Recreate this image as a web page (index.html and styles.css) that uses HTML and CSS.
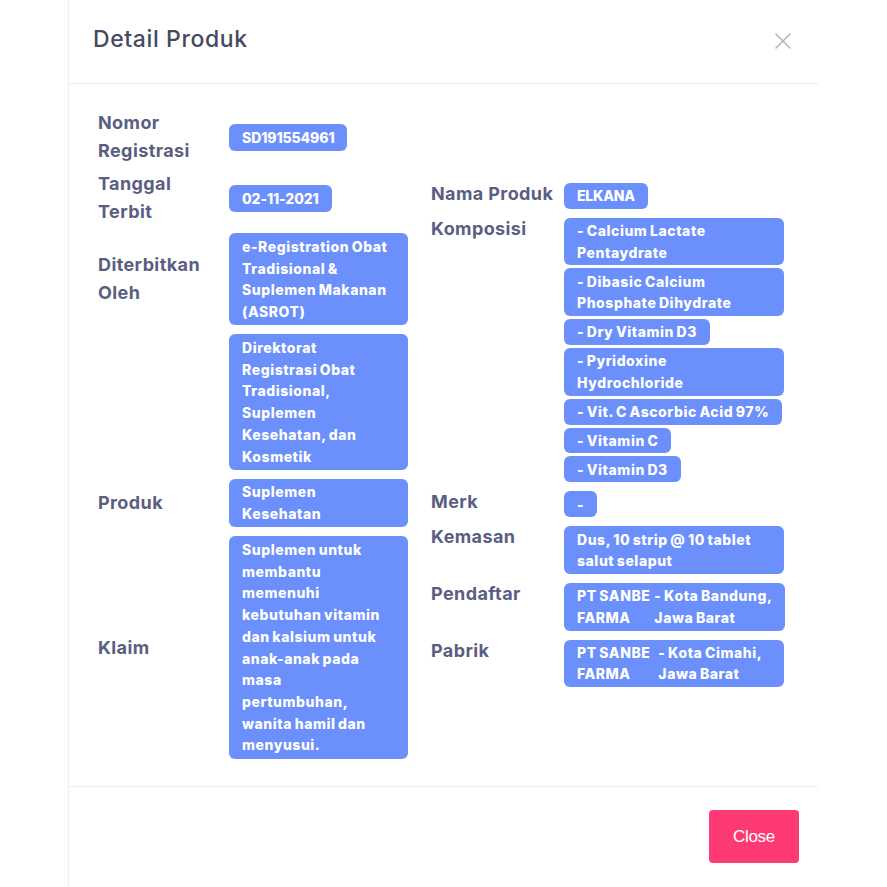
FILE: index.html
```html
<!DOCTYPE html>
<html lang="id">
<head>
<meta charset="utf-8">
<title>Detail Produk</title>
<link rel="stylesheet" href="styles.css">
</head>
<body>
<div class="modal">
  <div class="modal-header">
    <h2 class="modal-title">Detail Produk</h2>
    <span class="close-x">
      <svg width="18" height="18" viewBox="0 0 18 18"><path d="M2 2 L16 16 M16 2 L2 16" stroke="#b5b5c3" stroke-width="1.6" fill="none" stroke-linecap="round"/></svg>
    </span>
  </div>
  <div class="modal-body">
    <div class="table left">
      <div class="lbl">Nomor<br>Registrasi</div>
      <div class="val"><span class="badge num">SD191554961</span></div>

      <div class="lbl">Tanggal<br>Terbit</div>
      <div class="val"><span class="badge num">02-11-2021</span></div>

      <div class="lbl">Diterbitkan<br>Oleh</div>
      <div class="val"><span class="badge full">e-Registration Obat<br>Tradisional &amp;<br>Suplemen Makanan<br>(ASROT)</span></div>

      <div class="lbl"></div>
      <div class="val"><span class="badge full">Direktorat<br>Registrasi Obat<br>Tradisional,<br>Suplemen<br>Kesehatan, dan<br>Kosmetik</span></div>

      <div class="lbl">Produk</div>
      <div class="val"><span class="badge full">Suplemen<br>Kesehatan</span></div>

      <div class="lbl">Klaim</div>
      <div class="val"><span class="badge full">Suplemen untuk<br>membantu<br>memenuhi<br>kebutuhan vitamin<br>dan kalsium untuk<br>anak-anak pada<br>masa<br>pertumbuhan,<br>wanita hamil dan<br>menyusui.</span></div>
    </div>

    <div class="table right">
      <div class="lbl">Nama Produk</div>
      <div class="val"><span class="badge caps">ELKANA</span></div>

      <div class="lbl">Komposisi</div>
      <div class="val list">
        <span class="badge full">- Calcium Lactate<br>Pentaydrate</span>
        <span class="badge full">- Dibasic Calcium<br>Phosphate Dihydrate</span>
        <span class="badge">- Dry Vitamin D3</span>
        <span class="badge full">- Pyridoxine<br>Hydrochloride</span>
        <span class="badge">- Vit. C Ascorbic Acid 97%</span>
        <span class="badge">- Vitamin C</span>
        <span class="badge">- Vitamin D3</span>
      </div>

      <div class="lbl">Merk</div>
      <div class="val"><span class="badge">-</span></div>

      <div class="lbl">Kemasan</div>
      <div class="val"><span class="badge full">Dus, 10 strip @ 10 tablet<br>salut selaput</span></div>

      <div class="lbl">Pendaftar</div>
      <div class="val"><span class="badge full split"><span>PT SANBE<br>FARMA</span><span>- Kota Bandung,<br>Jawa Barat</span></span></div>

      <div class="lbl">Pabrik</div>
      <div class="val"><span class="badge full split wide"><span>PT SANBE<br>FARMA</span><span>- Kota Cimahi,<br>Jawa Barat</span></span></div>
    </div>
  </div>
  <div class="modal-footer">
    <button class="btn-close">Close</button>
  </div>
</div>
</body>
</html>
```

FILE: styles.css
```css
html, body {
  margin: 0;
  padding: 0;
  background: #ffffff;
}

body {
  font-family: "Inter", "Liberation Sans", sans-serif;
}

.modal {
  margin-left: 68px;
  width: 750px;
  border-left: 1px solid #eceef3;
  min-height: 887px;
  box-sizing: border-box;
}

.modal-header {
  border-bottom: 1px solid #ebedf3;
  display: flex;
  align-items: center;
  justify-content: space-between;
  padding: 0 26px 5px 24px;
  box-sizing: border-box;
  height: 84px;
}

.modal-title {
  margin: 0;
  font-size: 23px;
  font-weight: 500;
  color: #464960;
  letter-spacing: 0.6px;
}

.close-x {
  display: flex;
  margin-top: 4px;
}

.modal-body {
  display: flex;
  align-items: center;
  gap: 23px;
  padding: 26px 29px 26px 29px;
  height: 703px;
  box-sizing: border-box;
  border-bottom: 1px solid #ebedf3;
}

.table {
  display: grid;
}

.table.left {
  grid-template-columns: 131px 179px;
  align-items: center;
  row-gap: 5px;
}

.table.right {
  grid-template-columns: 133px 220px;
  align-items: start;
  row-gap: 5px;
}

.lbl {
  font-size: 18px;
  font-weight: 700;
  color: #5a5e82;
  letter-spacing: 0.4px;
}

.left .lbl {
  line-height: 28px;
}

.right .lbl {
  line-height: 26px;
}

.val {
  display: flex;
  align-items: flex-start;
}

.badge {
  display: inline-block;
  background: #6b8ffb;
  color: #ffffff;
  font-size: 14px;
  font-weight: 800;
  line-height: 21.6px;
  padding: 2.2px 13px;
  border-radius: 6px;
  margin: 2px 0;
  white-space: nowrap;
  letter-spacing: 0.55px;
  word-spacing: -1px;
}

.left .badge {
  line-height: 21.7px;
  padding: 2.6px 13px;
}

.badge.num {
  letter-spacing: -0.1px;
}

.badge.caps {
  letter-spacing: -0.2px;
}

.badge.full {
  flex: 1;
}

.val.list {
  flex-direction: column;
  gap: 3px;
  padding: 2px 0;
}

.val.list .badge {
  margin: 0;
}

.val.list .badge.full {
  align-self: stretch;
}

.badge.split {
  display: flex;
  gap: 4px;
}

.badge.split.wide {
  gap: 8px;
}

.modal-footer {
  display: flex;
  justify-content: flex-end;
  padding: 23px 19px 0 0;
}

.btn-close {
  width: 90px;
  height: 53px;
  border: none;
  border-radius: 4px;
  background: #fd3a73;
  color: #ffffff;
  font-family: "Liberation Sans", Arial, sans-serif;
  font-size: 17px;
  letter-spacing: -0.3px;
}
```
